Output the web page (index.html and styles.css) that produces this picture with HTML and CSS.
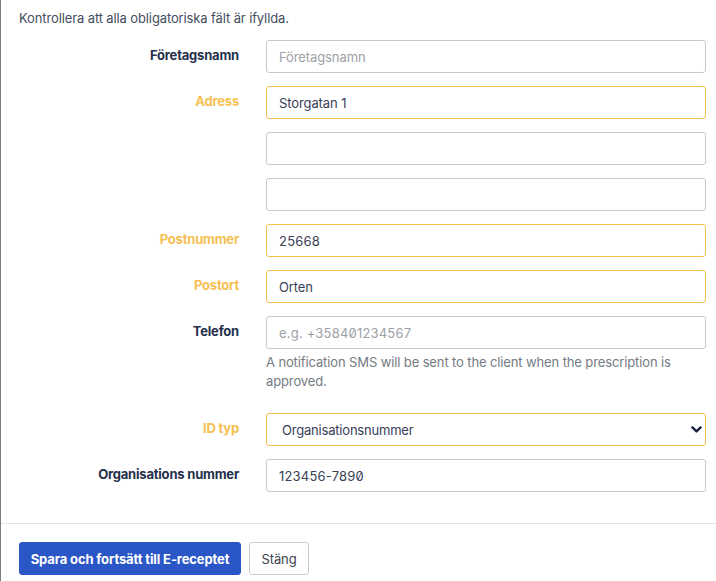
FILE: index.html
```html
<!DOCTYPE html>
<html lang="sv">
<head>
<meta charset="utf-8">
<title>Företag</title>
<link rel="stylesheet" href="styles.css">
</head>
<body>
<div class="modal">
  <div class="modal-body">
    <p class="intro">Kontrollera att alla obligatoriska fält är ifyllda.</p>
    <div class="row">
      <label class="lbl">Företagsnamn</label>
      <div class="field"><input class="inp" type="text" placeholder="Företagsnamn"></div>
    </div>
    <div class="row">
      <label class="lbl warn">Adress</label>
      <div class="field"><input class="inp warn" type="text" value="Storgatan 1"></div>
    </div>
    <div class="row">
      <span class="lbl"></span>
      <div class="field"><input class="inp" type="text"></div>
    </div>
    <div class="row">
      <span class="lbl"></span>
      <div class="field"><input class="inp" type="text"></div>
    </div>
    <div class="row">
      <label class="lbl warn">Postnummer</label>
      <div class="field"><input class="inp warn num" type="text" value="25668"></div>
    </div>
    <div class="row">
      <label class="lbl warn">Postort</label>
      <div class="field"><input class="inp warn" type="text" value="Orten"></div>
    </div>
    <div class="row row-help">
      <label class="lbl">Telefon</label>
      <div class="field">
        <input class="inp num" type="text" placeholder="e.g. +358401234567">
        <p class="help">A notification SMS will be sent to the client when the prescription is approved.</p>
      </div>
    </div>
    <div class="row">
      <label class="lbl warn">ID typ</label>
      <div class="field sel-wrap">
        <select class="inp warn sel"><option>Organisationsnummer</option></select>
        <svg class="chev" width="11" height="7" viewBox="0 0 11 7"><path d="M1.4 1.4 L5.5 5.4 L9.6 1.4" fill="none" stroke="#1b2540" stroke-width="2.4" stroke-linecap="round" stroke-linejoin="round"/></svg>
      </div>
    </div>
    <div class="row">
      <label class="lbl">Organisations nummer</label>
      <div class="field"><input class="inp num" type="text" value="123456-7890"></div>
    </div>
  </div>
  <div class="modal-footer">
    <button class="btn btn-primary" type="button">Spara och fortsätt till E-receptet</button>
    <button class="btn btn-light" type="button">Stäng</button>
  </div>
</div>
</body>
</html>
```
FILE: styles.css
```css
html, body {
  margin: 0;
  padding: 0;
  background: #ffffff;
}
body {
  font-family: Inter, "Noto Sans", sans-serif;
  font-size: 13px;
  letter-spacing: -0.12px;
  color: #3a4356;
}
.modal {
  width: 716px;
  height: 581px;
  box-sizing: border-box;
  border-left: 1px solid #7d7d7d;
  background: #fff;
}
.modal-body {
  padding: 8px 10px 31px 18px;
}
.intro {
  margin: 0 0 12px 0;
  line-height: 20px;
  color: #444d60;
}
.row {
  display: grid;
  grid-template-columns: 220px 1fr;
  column-gap: 27px;
  margin-bottom: 13px;
}
.row:last-child {
  margin-bottom: 0;
}
.row-help {
  margin-bottom: 22px;
}
.lbl {
  text-align: right;
  font-weight: 700;
  color: #25304b;
  padding-top: 6px;
  line-height: 18px;
  letter-spacing: -0.2px;
}
.lbl.warn {
  color: #f6c053;
}
.field {
  min-width: 0;
}
.inp {
  display: block;
  width: 100%;
  height: 33px;
  box-sizing: border-box;
  border: 1px solid #c3cad2;
  border-radius: 3px;
  padding: 0 12px;
  font-family: Inter, "Noto Sans", sans-serif;
  font-size: 13px;
  letter-spacing: -0.1px;
  color: #384157;
  background: #fff;
  outline: none;
}
.inp::placeholder {
  color: #9ca1a7;
}
.inp.warn {
  border-color: #f5c04f;
}
.num {
  font-variant-numeric: slashed-zero;
  letter-spacing: 0.2px;
}
.help {
  margin: 4px 0 0 0;
  line-height: 19px;
  color: #747b83;
}
.sel-wrap {
  position: relative;
}
.sel {
  appearance: none;
  -webkit-appearance: none;
  padding-left: 15px;
  letter-spacing: -0.2px;
}
.chev {
  position: absolute;
  right: 4px;
  top: 13px;
  pointer-events: none;
}
.modal-footer {
  border-top: 1px solid #e3e3e3;
  padding: 18px 18px 0 18px;
  display: flex;
  gap: 8px;
}
.btn {
  height: 33px;
  box-sizing: border-box;
  border-radius: 3px;
  font-family: Inter, "Noto Sans", sans-serif;
  font-size: 13px;
  letter-spacing: -0.12px;
  padding: 0 8px;
  white-space: nowrap;
  cursor: pointer;
}
.btn-primary {
  background: #2a57c5;
  border: 1px solid #2a57c5;
  color: #fff;
  font-weight: 700;
  width: 222px;
}
.btn-light {
  background: #fff;
  border: 1px solid #c8ccd1;
  color: #3d4350;
  width: 60px;
}
```
